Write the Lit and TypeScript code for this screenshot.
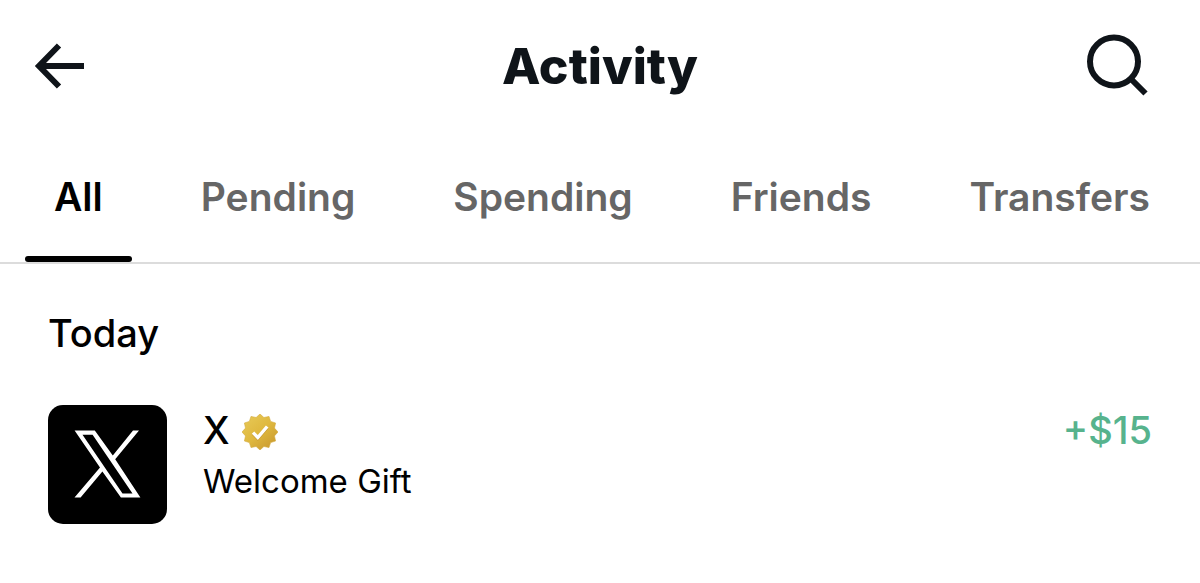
import { LitElement, html, css, svg } from "lit";
import { customElement, property, state } from "lit/decorators.js";
import { classMap } from "lit/directives/class-map.js";

const TABS = ["All", "Pending", "Spending", "Friends", "Transfers"];

// Twelve-pointed star outline of the badge.
const SEAL = Array.from({ length: 24 }, (_, i) => {
  const radius = i % 2 ? 15 : 18;
  const angle = (i * Math.PI) / 12;
  return `${(18 + radius * Math.sin(angle)).toFixed(2)},${(18 - radius * Math.cos(angle)).toFixed(2)}`;
}).join(" ");

@customElement("verified-badge")
export class VerifiedBadge extends LitElement {
  static styles = css`
    :host {
      display: block;
      flex: none;
    }
    .badge {
      display: block;
      width: 36px;
      height: 36px;
    }
  `;

  render() {
    return html`
      <svg class="badge" viewBox="0 0 36 36" role="img" aria-label="Verified organization">
        <defs>
          <linearGradient id="gold" x1="0.15" y1="0.1" x2="0.85" y2="0.9">
            <stop offset="0" stop-color="#e6c653" />
            <stop offset="0.5" stop-color="#dfb83e" />
            <stop offset="1" stop-color="#cb9c30" />
          </linearGradient>
        </defs>
        ${svg`<polygon points=${SEAL} fill="url(#gold)" stroke="#d3a93a" stroke-width="0.6" stroke-linejoin="round" />`}
        <path d="M11 19.6l4.800 4.900 9.400-11" fill="none" stroke="#c0922c" stroke-width="3" />
        <path d="M11 18.600l4.800 4.900 9.400-11" fill="none" stroke="#fff" stroke-width="3.400" />
      </svg>
    `;
  }
}

@customElement("activity-row")
export class ActivityRow extends LitElement {
  @property() name = "";
  @property() note = "";
  @property() amount = "";

  static styles = css`
    :host {
      display: flex;
      align-items: flex-start;
      gap: 36px;
    }
    .avatar {
      flex: none;
      display: block;
      width: 119px;
      height: 119px;
      border-radius: 15px;
      background: #000;
    }
    .details {
      flex: 1;
      min-width: 0;
    }
    .name {
      display: flex;
      align-items: flex-end;
      gap: 12px;
      font-size: 38px;
      font-weight: 500;
      line-height: 50px;
    }
    .name verified-badge {
      padding-bottom: 5px;
    }
    .note {
      font-size: 33px;
      line-height: 52px;
    }
    .amount {
      font-size: 38px;
      font-weight: 500;
      line-height: 50px;
      color: #57b38d;
    }
  `;

  render() {
    return html`
      <svg class="avatar" viewBox="0 0 119 119" aria-hidden="true">
        <path
          fill="#fff"
          fill-rule="evenodd"
          d="M26.6 25.6H46.800L64.800 50.500 85 25.600H91L67.200 54.200 92.400 92.600H72.900L54.400 66.500 32.600 92.600H26.500L52 62.400zM34.500 29.700L74.500 88.500H84.500L44.600 29.700z"
        />
      </svg>
      <div class="details">
        <div class="name"><span>${this.name}</span><verified-badge></verified-badge></div>
        <div class="note">${this.note}</div>
      </div>
      <div class="amount">${this.amount}</div>
    `;
  }
}

@customElement("app-root")
export class AppRoot extends LitElement {
  @state() private selected = "All";

  static styles = css`
    :host {
      display: block;
      min-height: 100vh;
      background: #fff;
      color: #000;
      font-family: Inter, "Liberation Sans", sans-serif;
    }
    button {
      margin: 0;
      padding: 0;
      border: 0;
      background: none;
      color: inherit;
      font: inherit;
      cursor: pointer;
    }
    .header {
      display: grid;
      grid-template-columns: 1fr auto 1fr;
      align-items: center;
      padding: 34px 32px;
      color: #0f1419;
    }
    .title {
      margin: 0;
      font-size: 50px;
      font-weight: 800;
      line-height: 64px;
    }
    .back {
      justify-self: start;
    }
    .search {
      justify-self: end;
      margin-right: 18px;
    }
    .icon {
      display: block;
      width: 64px;
      height: 64px;
      fill: none;
      stroke: currentColor;
      stroke-width: 6;
    }
    .tabs {
      display: flex;
      justify-content: space-between;
      padding: 0 21px 0 25px;
      border-bottom: 2px solid #dcdcdc;
    }
    .tab {
      display: flex;
      flex-direction: column;
      gap: 34px;
      font-size: 39px;
      font-weight: 600;
      line-height: 50px;
      color: #666;
    }
    .label {
      padding: 40px 29px 0;
    }
    .bar {
      align-self: stretch;
      height: 6px;
      border-radius: 3px;
    }
    .active {
      color: #000;
    }
    .active .bar {
      background: #000;
    }
    .list {
      padding: 44px 48px;
    }
    .day {
      margin: 0 0 47px;
      font-size: 38px;
      font-weight: 500;
      line-height: 50px;
    }
  `;

  render() {
    return html`
      <header class="header">
        <button class="back" aria-label="Back">
          <svg class="icon" viewBox="0 0 64 64">
            <path d="M52 32H7M27 11.5L7 32l20 20.5" />
          </svg>
        </button>
        <h1 class="title">Activity</h1>
        <button class="search" aria-label="Search">
          <svg class="icon" viewBox="0 0 64 64">
            <circle cx="28" cy="27.5" r="24" />
            <path d="M44.5 44.5l15 15" />
          </svg>
        </button>
      </header>
      <nav class="tabs" role="tablist">
        ${TABS.map(
          (tab) => html`
            <button
              role="tab"
              aria-selected=${tab === this.selected}
              class=${classMap({ tab: true, active: tab === this.selected })}
              @click=${() => (this.selected = tab)}
            >
              <span class="label">${tab}</span><span class="bar"></span>
            </button>
          `
        )}
      </nav>
      <main class="list">
        <h2 class="day">Today</h2>
        <activity-row name="X" note="Welcome Gift" amount="+$15"></activity-row>
      </main>
    `;
  }
}
